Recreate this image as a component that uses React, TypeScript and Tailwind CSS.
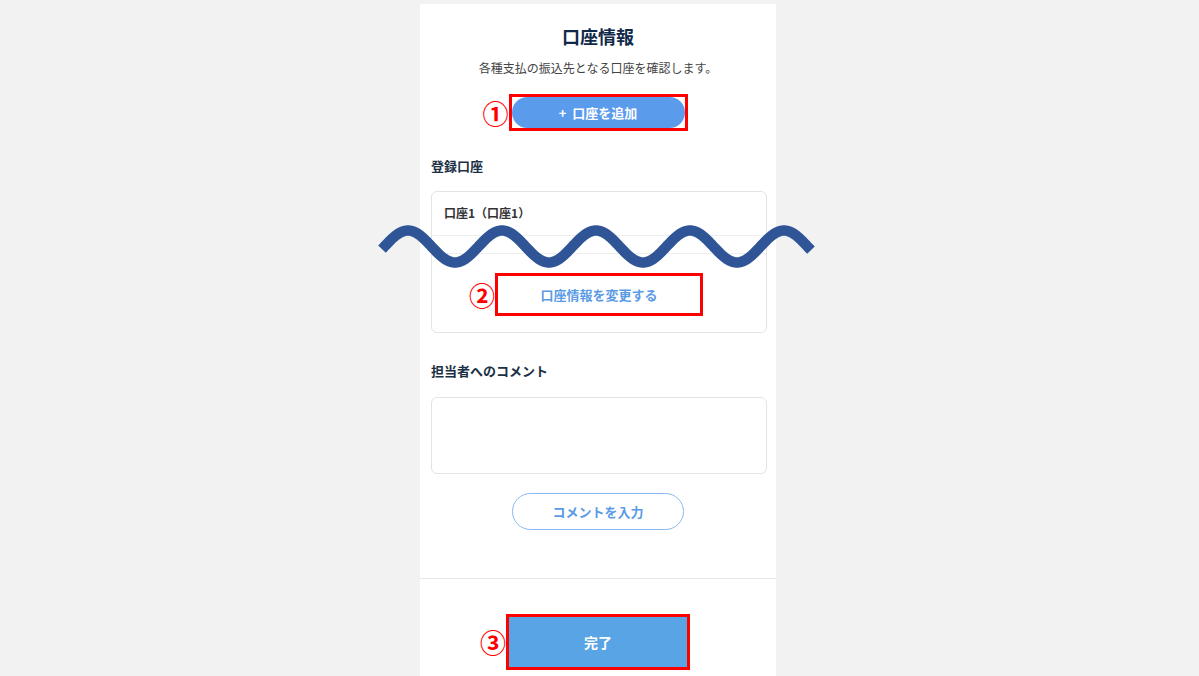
import React from "react";

const jp = { fontFamily: '"Noto Sans CJK JP", "Noto Sans", sans-serif' };

function Num({ children }: { children: React.ReactNode }) {
  return (
    <span className="absolute right-full top-1/2 mr-[3px] -translate-y-1/2 text-[26px] font-bold leading-none text-[#ff0000]">
      {children}
    </span>
  );
}

function Wave() {
  // wavy line drawn over the card to show omitted content
  const pts: string[] = [];
  for (let x = 7; x <= 436; x += 1) {
    const y = 28.5 - 16 * Math.cos((2 * Math.PI * (x - 33)) / 94);
    pts.push(`${x},${y.toFixed(2)}`);
  }
  return (
    <svg
      className="pointer-events-none absolute left-[-45px] top-[214px]"
      width="445"
      height="56"
      viewBox="0 0 445 56"
    >
      <polyline points={pts.join(" ")} fill="none" stroke="#2f5597" strokeWidth="10.5" strokeLinejoin="round" />
    </svg>
  );
}

export default function App() {
  return (
    <div className="flex min-h-screen justify-center bg-[#f2f2f2] pr-[3px] pt-[4px]" style={jp}>
      <div className="relative h-[672px] w-[356px] bg-white">
        <div className="flex flex-col items-center pt-[20px]">
          <h1 className="text-[18px] font-bold leading-[24px] text-[#10294a]">口座情報</h1>
          <p className="mt-[11px] text-[12px] leading-[18px] text-[#444]">各種支払の振込先となる口座を確認します。</p>
          <div className="relative mt-[17px] border-[3px] border-[#ff0000]">
            <Num>①</Num>
            <button className="flex h-[31px] w-[173px] items-center justify-center gap-[6px] rounded-full bg-[#5b9bec] text-[13px] font-bold text-white">
              <span>+</span>
              <span>口座を追加</span>
            </button>
          </div>
        </div>

        <div className="px-[11px]">
          <h2 className="mt-[26px] text-[13px] font-bold leading-[18px] text-[#1b2f45]">登録口座</h2>
          <div className="mt-[16px] w-[336px] rounded-[6px] border border-[#e3e3e3] pb-[16px] pt-[12px]">
            <p className="px-[12px] text-[12px] font-bold leading-[18px] text-[#333]">口座1（口座1）</p>
            <div className="mt-[13px] h-[19px] border-y border-[#eeeeee]" />
            <div className="mt-[19px] flex justify-center">
              <div className="relative border-[3px] border-[#ff0000]">
                <Num>②</Num>
                <button className="flex h-[37px] w-[202px] items-center justify-center bg-white text-[13px] font-bold text-[#5b9be6]">
                  口座情報を変更する
                </button>
              </div>
            </div>
          </div>

          <h2 className="mt-[29px] text-[13px] font-bold leading-[18px] text-[#1b2f45]">担当者へのコメント</h2>
          <div className="mt-[17px] h-[77px] w-[336px] rounded-[6px] border border-[#e3e3e3]" />
          <div className="mt-[19px] flex justify-center">
            <button className="h-[37px] w-[172px] rounded-full border border-[#8cb8f0] text-[13px] font-bold text-[#5b9be6]">
              コメントを入力
            </button>
          </div>
        </div>

        <div className="mt-[48px] border-t border-[#e8e8e8]" />
        <div className="mt-[35px] flex justify-center">
          <div className="relative border-[3px] border-[#ff0000]">
            <Num>③</Num>
            <button className="flex h-[50px] w-[178px] items-center justify-center bg-[#58a4e4] text-[14px] font-bold text-white">
              完了
            </button>
          </div>
        </div>

        <Wave />
      </div>
    </div>
  );
}
